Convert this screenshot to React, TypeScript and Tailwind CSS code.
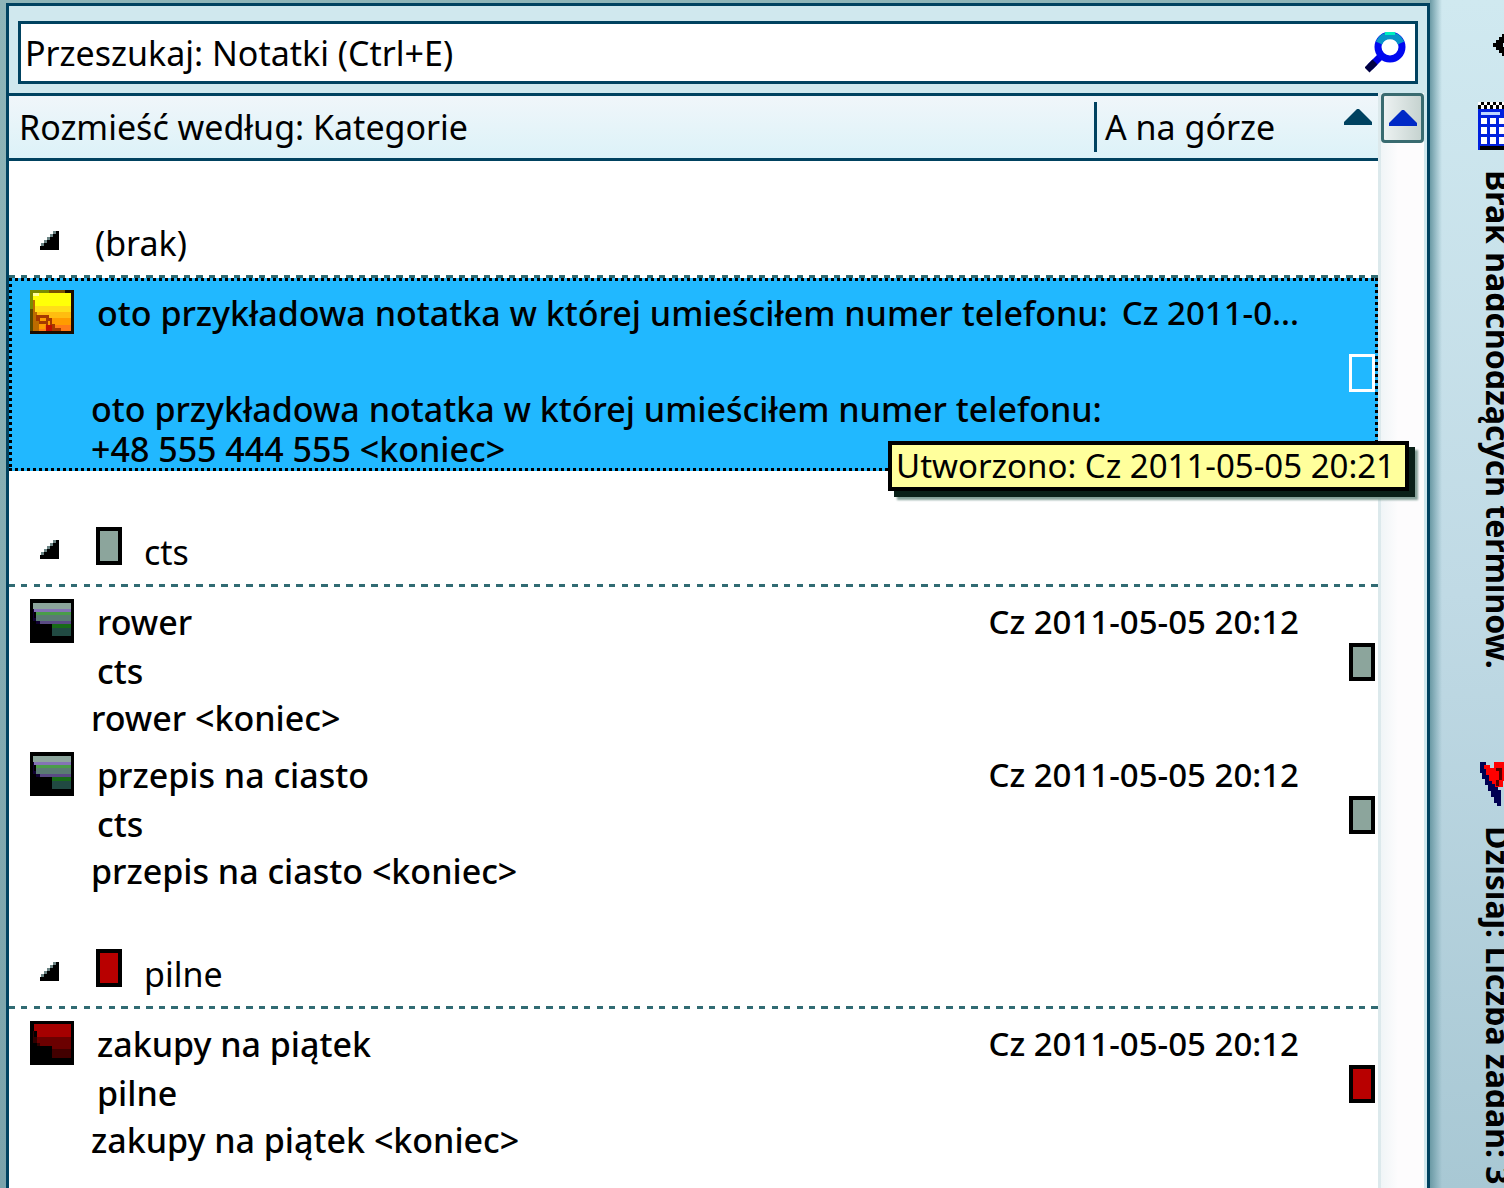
import React from "react";

interface Note {
  id: number;
  title: string;
  date: string;
  category: string;
  body: string[];
  color: "yellow" | "gray" | "red";
  selected?: boolean;
}

interface Group {
  name: string;
  color?: "gray" | "red";
  notes: Note[];
}

const groups: Group[] = [
  {
    name: "(brak)",
    notes: [
      {
        id: 1,
        title: "oto przykładowa notatka w której umieściłem numer telefonu:",
        date: "Cz 2011-0...",
        category: "",
        body: [
          "oto przykładowa notatka w której umieściłem numer telefonu:",
          "+48 555 444 555 <koniec>",
        ],
        color: "yellow",
        selected: true,
      },
    ],
  },
  {
    name: "cts",
    color: "gray",
    notes: [
      {
        id: 2,
        title: "rower",
        date: "Cz 2011-05-05 20:12",
        category: "cts",
        body: ["rower <koniec>"],
        color: "gray",
      },
      {
        id: 3,
        title: "przepis na ciasto",
        date: "Cz 2011-05-05 20:12",
        category: "cts",
        body: ["przepis na ciasto <koniec>"],
        color: "gray",
      },
    ],
  },
  {
    name: "pilne",
    color: "red",
    notes: [
      {
        id: 4,
        title: "zakupy na piątek",
        date: "Cz 2011-05-05 20:12",
        category: "pilne",
        body: ["zakupy na piątek <koniec>"],
        color: "red",
      },
    ],
  },
];

const swatchColors = {
  gray: "border-4 border-black bg-[#8ca59c]",
  red: "border-4 border-black bg-[#b80000]",
  none: "border-3 border-white bg-transparent",
};

function Swatch({ color }: { color: "gray" | "red" | "none" }) {
  return <span className={`block h-[38px] w-[26px] shrink-0 ${swatchColors[color]}`} />;
}

function NoteIcon({ color }: { color: Note["color"] }) {
  if (color === "yellow") {
    return (
      <svg className="size-11 shrink-0" viewBox="0 0 44 44" shapeRendering="crispEdges" aria-hidden="true">
        <path d="M0 0h44v44H0z" fill="#1a0c00" />
        <path d="M0 0h19v3H3v16H0z" fill="#7b8c00" />
        <path d="M19 0h16v3H19z" fill="#7b5200" />
        <path d="M0 19h3v22H0z" fill="#5a4a00" />
        <path d="M3 3h38v38H3z" fill="#ffff08" />
        <path d="M3 3h6v3H3z" fill="#ffff9c" />
        <path d="M3 16h38v6H3z" fill="#ffde18" />
        <path d="M3 22h38v6H3z" fill="#ffbd10" />
        <path d="M3 28h38v7H3z" fill="#ff9c00" />
        <path d="M3 35h38v6H3z" fill="#ff7b18" />
        <path d="M3 10h2v12h2v4h2v15H3z" fill="#bd6b00" />
        <path d="M6 25h13v3h3v6h3v4h6v3h-9v-3h-6v-4H9v-3H6z" fill="#a53900" />
        <path d="M10 28h6v3h-6zM9 35h6v4H9zM18 31h2v4h-2z" fill="#ff9c00" />
        <path d="M16 35h6v6h-6z" fill="#bd1000" />
      </svg>
    );
  }
  if (color === "gray") {
    return (
      <svg className="size-11 shrink-0" viewBox="0 0 44 44" shapeRendering="crispEdges" aria-hidden="true">
        <path d="M0 0h44v44H0z" fill="#000000" />
        <path d="M3 4h38v6H3z" fill="#8ca59c" />
        <path d="M4 10h37v3H4z" fill="#8473b5" />
        <path d="M6 13h35v3H6z" fill="#4a9c4a" />
        <path d="M6 16h35v6H6z" fill="#5a7b73" />
        <path d="M10 22h31v3H10z" fill="#5a4a84" />
        <path d="M22 25h19v4H22z" fill="#186b18" />
        <path d="M22 29h19v8H22z" fill="#214a42" />
        <path d="M3 10h1v9h2v3h4v3H6v-3H3z" fill="#100031" />
      </svg>
    );
  }
  return (
    <svg className="size-11 shrink-0" viewBox="0 0 44 44" shapeRendering="crispEdges" aria-hidden="true">
      <path d="M0 0h44v44H0z" fill="#000000" />
      <path d="M4 3h37v13H7v-6H4z" fill="#a50000" />
      <path d="M7 16h34v12H22v-3H10v-3H7z" fill="#6b0000" />
      <path d="M22 28h19v9H22z" fill="#420000" />
      <path d="M3 10h1v6h3v6h3v3H7v-3H3z" fill="#310000" />
    </svg>
  );
}

function GroupHeader({ group }: { group: Group }) {
  return (
    <>
      <button type="button" aria-expanded="true" className="flex h-[113px] w-full items-end pb-3 pl-[31px] text-left">
        <svg className="mb-[13px] mr-9 size-[19px] shrink-0" viewBox="0 0 19 19" shapeRendering="crispEdges" aria-hidden="true">
          <path d="M13 0h6v19H0v-4h2v-3h3V9h3V6h2V3h3z" fill="#000000" />
          <path d="M13 0h3v3h-3zM10 3h3v3h-3zM7 6h3v3H7zM4 9h3v3H4zM1 12h3v3H1z" fill="#6b8484" />
        </svg>
        {group.color && (
          <span className="mb-[7px] ml-px mr-[22px]">
            <Swatch color={group.color} />
          </span>
        )}
        <span className="leading-10">{group.name}</span>
      </button>
      <div className="h-[3px] bg-[repeating-linear-gradient(90deg,#316b73_0_6px,transparent_6px_12.5px)]" />
    </>
  );
}

function NoteRow({ note }: { note: Note }) {
  return (
    <li
      className={`relative flex pb-0.5 pl-[21px] pt-3 font-medium ${note.selected ? "bg-[#21b8ff]" : ""}`}
    >
      {note.selected && (
        <>
          <span className="absolute inset-x-0 top-0 h-[3px] bg-[repeating-linear-gradient(90deg,#000_0_3px,transparent_3px_6px)]" />
          <span className="absolute inset-x-0 bottom-0 h-[3px] bg-[repeating-linear-gradient(90deg,#000_0_3px,transparent_3px_6px)]" />
          <span className="absolute inset-y-0 left-0 w-[3px] bg-[repeating-linear-gradient(180deg,#000_0_3px,transparent_3px_6px)]" />
          <span className="absolute inset-y-0 right-0 w-[3px] bg-[repeating-linear-gradient(180deg,#000_0_3px,transparent_3px_6px)]" />
        </>
      )}
      <NoteIcon color={note.color} />
      <div className="min-w-0 flex-1 pl-[17px]">
        <div className="flex justify-between pl-1.5">
          <span className="h-12 whitespace-nowrap leading-[46px]">{note.title}</span>
          <span className="h-12 whitespace-nowrap text-[33px] leading-[46px]">{note.date}</span>
        </div>
        <div className="h-12 pl-1.5 leading-[48px]">{note.category}</div>
        <div className="pt-[3px]">
          {note.body.map((line) => (
            <p key={line} className="whitespace-nowrap leading-10">{line}</p>
          ))}
        </div>
      </div>
      <div className="flex w-[79px] shrink-0 items-center justify-end pb-3.5 pr-[3px]">
        <Swatch color={note.selected ? "none" : (note.color as "gray" | "red")} />
      </div>
      {note.selected && (
        <div
          role="tooltip"
          className="absolute -bottom-5 -right-[31px] z-10 whitespace-nowrap border-4 border-black bg-[#ffff9c] pl-1 pr-2.5 text-[33px] font-normal leading-[42px] shadow-[6px_6px_0_0_#0a2018,9px_9px_2px_0_#84a098]"
        >
          Utworzono: Cz 2011-05-05 20:21
        </div>
      )}
    </li>
  );
}

function TodoBar() {
  return (
    <aside className="flex w-[74px] shrink-0 overflow-hidden bg-linear-to-b from-[#d0e9f0] via-[#c0dae5] to-[#a8c8d4]">
      <div className="w-3 shrink-0 bg-linear-to-r from-[#6b9aa5] to-transparent" />
      <div className="flex w-24 shrink-0 flex-col items-start pl-9">
        <button type="button" aria-label="Rozwiń pasek zadań" className="ml-[15px] mt-[34px]">
          <svg className="block h-[22px] w-[22px]" viewBox="0 0 22 22" shapeRendering="crispEdges">
            <path d="M9 0h10v3h-3v3h-3v3h-3v4h3v3h3v3h3v3H9v-3H6v-3H3v-3H0V9h3V6h3V3h3z" fill="#000000" />
          </svg>
        </button>
        <svg className="mt-[46px] h-12 w-11 shrink-0" viewBox="0 0 44 48" shapeRendering="crispEdges" aria-hidden="true">
          <path d="M0 6h44v42H0z" fill="#0021de" />
          <path d="M0 0h44v7H0z" fill="#ffffff" />
          <path d="M3 0h3v3H3zM9 0h3v3H9zM15 0h3v3h-3zM21 0h3v3h-3zM27 0h3v3h-3zM0 3h3v4H0zM6 3h3v4H6zM12 3h3v4h-3zM18 3h3v4h-3zM24 3h3v4h-3zM30 3h3v4h-3z" fill="#000000" />
          <path d="M3 10h19v3H3z" fill="#bdd6ff" />
          <path d="M3 16h6v6H3zM12 16h6v6h-6zM21 16h6v6h-6zM30 16h6v6h-6zM3 25h6v7H3zM12 25h6v7h-6zM21 25h6v7h-6zM30 25h6v7h-6zM3 35h6v7H3zM12 35h6v7h-6zM21 35h6v7h-6zM30 35h6v7h-6z" fill="#ffffff" />
          <path d="M2 44h42v4H2z" fill="#000000" />
        </svg>
        <p className="mt-5 h-[592px] shrink-0 whitespace-nowrap text-[32px] font-bold leading-10 [writing-mode:vertical-rl]">
          Brak nadchodzących terminów.
        </p>
        <svg className="h-11 w-11 shrink-0" viewBox="0 0 44 44" shapeRendering="crispEdges" aria-hidden="true">
          <path d="M2 0h6v4h3v6h3v6h3v6h3v6h3v16h-4v-3h-3v-6h-3v-6h-3v-6H7v-6H4v-6H2z" fill="#000052" />
          <path d="M6 3h6v3h4V0h18v19h-9v6h-8v-3h-3v-3h-3v-6H8V7H6z" fill="#ff0000" />
          <path d="M15 3h3v6h3v9h-3v6h3v-6h3V6h-6V3z" fill="#520000" />
        </svg>
        <p className="mt-5 whitespace-nowrap text-[32px] font-bold leading-10 [writing-mode:vertical-rl]">
          Dzisiaj: Liczba zadań: 3
        </p>
      </div>
    </aside>
  );
}

export default function App() {
  return (
    <div className="flex h-screen overflow-hidden bg-linear-to-b from-[#8fb5b8] to-[#7ba3ab] font-['Noto_Sans',sans-serif] text-[34px] text-black">
      <main className="ml-1.5 mt-[3px] flex min-w-0 flex-1 flex-col border-x-3 border-t-3 border-[#004260] bg-[#d0e8ee]">
        <div className="mx-[9px] mb-[9px] mt-[15px] flex h-[63px] shrink-0 items-center border-3 border-[#004260] bg-white pl-1 pr-2">
          <input
            type="text"
            aria-label="Przeszukaj notatki"
            placeholder="Przeszukaj: Notatki (Ctrl+E)"
            className="h-full min-w-0 flex-1 bg-transparent outline-none placeholder:text-black"
          />
          <button type="button" aria-label="Szukaj">
            <svg className="block h-[42px] w-[42px]" viewBox="0 0 42 42" aria-hidden="true">
              <path d="M5 35L18 22" stroke="#0000e0" strokeWidth="7" />
              <path d="M2 38L10 30" stroke="#000042" strokeWidth="7" />
              <circle cx="25" cy="15" r="12" fill="none" stroke="#0008f0" strokeWidth="7" />
              <path d="M14 11A12 12 0 0 1 36 11" fill="none" stroke="#0894c8" strokeWidth="7" />
              <path d="M20 1h10" stroke="#00f0c0" strokeWidth="4" />
            </svg>
          </button>
        </div>

        <div className="flex min-h-0 flex-1">
          <section className="min-w-0 flex-1 bg-white">
            <div className="mb-px flex h-[68px] items-center border-y-3 border-[#004260] bg-linear-to-b from-[#f0f6fa] to-[#dcf2f8]">
              <button type="button" className="flex-1 pl-2.5 text-left">
                Rozmieść według: Kategorie
              </button>
              <button
                type="button"
                className="flex h-[50px] w-[284px] items-center justify-between border-l-3 border-[#004260] pl-2 pr-1.5"
              >
                A na górze
                <svg className="mb-5 h-4 w-7" viewBox="0 0 28 16" aria-hidden="true">
                  <path d="M13 0h2l13 13v3H0v-3z" fill="#004260" />
                </svg>
              </button>
            </div>
            {groups.map((group) => (
              <div key={group.name}>
                <GroupHeader group={group} />
                <ul>
                  {group.notes.map((note) => (
                    <NoteRow key={note.id} note={note} />
                  ))}
                </ul>
              </div>
            ))}
          </section>

          <div className="w-[46px] shrink-0 border-l-3 border-[#dce9ec] bg-linear-to-r from-[#f0f5f7] to-[#fdfcfd] to-40%">
            <button
              type="button"
              aria-label="Przewiń w górę"
              className="flex h-[50px] w-full items-center justify-center rounded-sm border-3 border-[#396b70] bg-linear-to-r from-[#edf2f2] to-[#c6d3d0]"
            >
              <svg className="h-4 w-7" viewBox="0 0 28 16" aria-hidden="true">
                <path d="M13 0h2l13 13v3H0v-3z" fill="#0029c6" />
              </svg>
            </button>
          </div>
          <div className="w-[3px] shrink-0" />
        </div>
      </main>
      <TodoBar />
    </div>
  );
}
